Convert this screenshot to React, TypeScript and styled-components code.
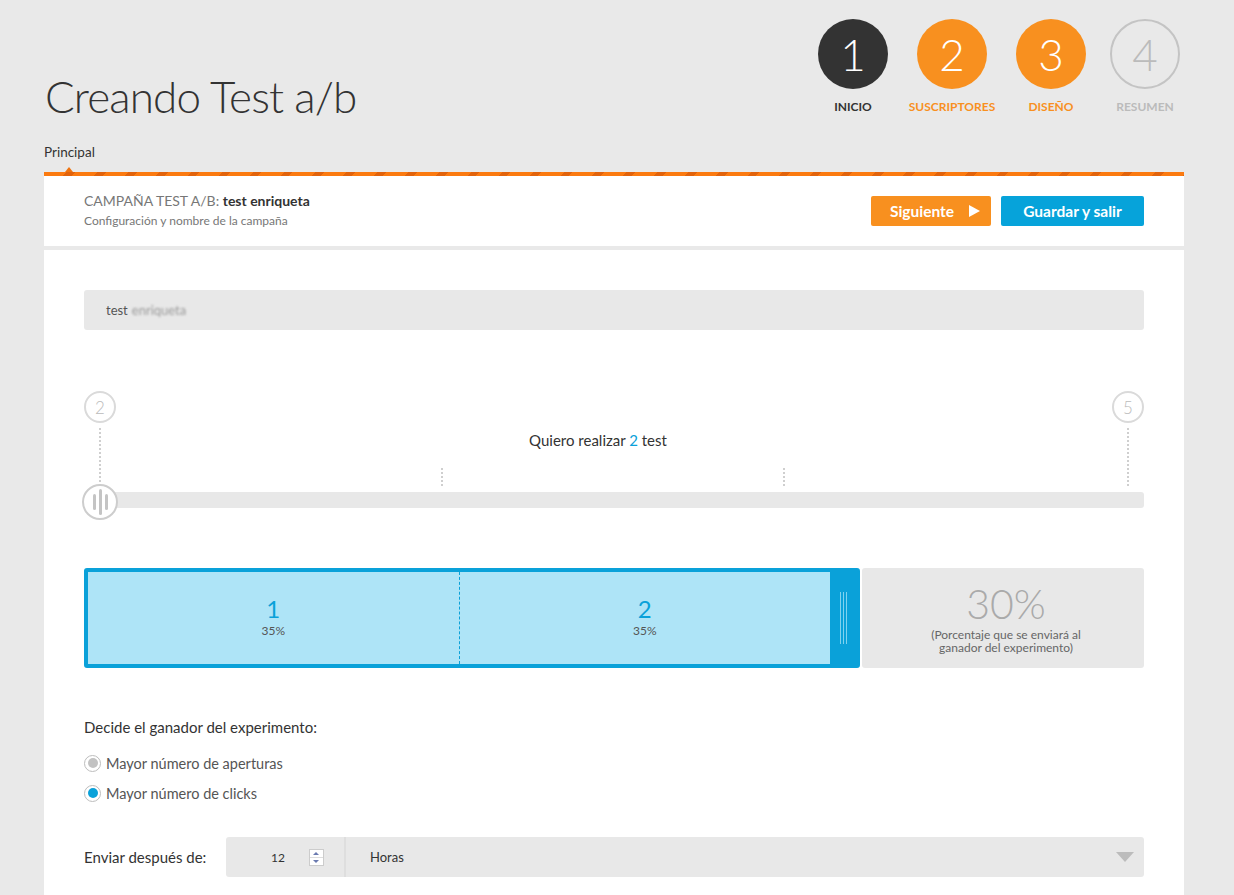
import React from 'react';
import styled, { createGlobalStyle } from 'styled-components';

const Global = createGlobalStyle`
  html, body { margin: 0; padding: 0; background: #e9e9e9; overflow: hidden; }
  body { font-family: Lato, "Open Sans", Arial, sans-serif; color: #333; }
  * { box-sizing: border-box; }
`;

const BLUE = '#0aa1d9';
const ORANGE = '#f8901f';

const Page = styled.div`
  height: 895px;
  padding: 0 50px 0 44px;
  display: flex;
  flex-direction: column;
`;

const Top = styled.div`
  display: flex;
  justify-content: space-between;
  align-items: flex-start;
  height: 136px;
`;

const Title = styled.h1`
  margin: 74px 0 0 1px;
  font-size: 44px;
  line-height: 44px;
  font-weight: 300;
  color: #333;
  letter-spacing: -0.85px;
`;

const Steps = styled.div`
  display: flex;
  margin: 19px 4px 0 0;
`;

const Step = styled.div<{ $gap: number }>`
  width: 70px;
  margin-left: ${(p) => p.$gap}px;
  display: flex;
  flex-direction: column;
  align-items: center;
`;

const StepCircle = styled.div<{ $bg: string; $border?: string; $color: string }>`
  width: 70px;
  height: 70px;
  border-radius: 50%;
  background: ${(p) => p.$bg};
  border: ${(p) => (p.$border ? `2px solid ${p.$border}` : 'none')};
  color: ${(p) => p.$color};
  display: flex;
  align-items: center;
  justify-content: center;
  font-size: 44px;
  font-weight: 300;
  line-height: 1;
`;

const StepLabel = styled.div<{ $color: string }>`
  margin-top: 11px;
  font-size: 12px;
  line-height: 14px;
  font-weight: 700;
  color: ${(p) => p.$color};
  white-space: nowrap;
  text-transform: uppercase;
`;

const Tabs = styled.div`
  height: 36px;
  display: flex;
`;

const Tab = styled.div`
  position: relative;
  height: 36px;
  padding-top: 8px;
  font-size: 13.5px;
  line-height: 16px;
  color: #333;
  &::after {
    content: '';
    position: absolute;
    bottom: 0;
    left: 50%;
    transform: translateX(-50%);
    border-left: 4px solid transparent;
    border-right: 4px solid transparent;
    border-bottom: 5px solid #ef7410;
  }
`;

const Panel = styled.div`
  flex: 1;
  background: #fff;
  display: flex;
  flex-direction: column;
`;

const OrangeBar = styled.div`
  height: 4px;
  background: repeating-linear-gradient(
    135deg,
    #fb7a10 0px,
    #fb7a10 16px,
    #e2630b 16px,
    #e2630b 22px
  );
`;

const Header = styled.div`
  height: 74px;
  padding: 0 40px;
  border-bottom: 4px solid #e9e9e9;
  display: flex;
  align-items: center;
  justify-content: space-between;
`;

const HeaderText = styled.div`
  display: flex;
  flex-direction: column;
  gap: 4px;
`;

const HeaderTitle = styled.div`
  font-size: 14px;
  line-height: 16px;
  color: #777;
  b { color: #333; font-weight: 700; }
`;

const HeaderSub = styled.div`
  font-size: 12px;
  line-height: 16px;
  color: #777;
`;

const Buttons = styled.div`
  display: flex;
  gap: 10px;
`;

const Button = styled.button<{ $bg: string; $w: number }>`
  width: ${(p) => p.$w}px;
  height: 30px;
  border: none;
  border-radius: 2px;
  background: ${(p) => p.$bg};
  color: #fff;
  font-family: Lato, sans-serif;
  font-size: 15.5px;
  font-weight: 700;
  display: flex;
  align-items: center;
  justify-content: center;
  gap: 15px;
  padding: 0;
`;

const PlayIcon = styled.span`
  display: inline-block;
  border-left: 11px solid #fff;
  border-top: 6.5px solid transparent;
  border-bottom: 6.5px solid transparent;
  margin-right: -8px;
`;

const Body = styled.div`
  padding: 40px 40px 0;
  display: flex;
  flex-direction: column;
`;

const NameInput = styled.div`
  height: 40px;
  background: #e8e8e8;
  border-radius: 3px;
  padding-left: 22px;
  display: flex;
  align-items: center;
  font-size: 13px;
  color: #555;
`;

const Blurred = styled.span`
  filter: blur(1.3px);
  color: #999;
  margin-left: 4px;
`;

const SliderWrap = styled.div`
  position: relative;
  margin-top: 61px;
`;

const EndLabels = styled.div`
  display: flex;
  justify-content: space-between;
`;

const NumCircle = styled.div`
  width: 32px;
  height: 32px;
  border-radius: 50%;
  border: 2px solid #dadada;
  color: #bbb;
  font-size: 17px;
  font-weight: 300;
  display: flex;
  align-items: center;
  justify-content: center;
  background: #fff;
`;

const Caption = styled.div`
  margin-top: 8px;
  padding-right: 32px;
  text-align: center;
  font-size: 15px;
  line-height: 18px;
  color: #333;
  span { color: ${BLUE}; }
`;

const Track = styled.div`
  margin-top: 43px;
  height: 16px;
  background: #e8e8e8;
  border-radius: 3px;
`;

const Tick = styled.div<{ $long?: boolean }>`
  position: absolute;
  width: 2px;
  top: ${(p) => (p.$long ? 37 : 77)}px;
  height: ${(p) => (p.$long ? 58 : 18)}px;
  background: repeating-linear-gradient(180deg, #cfcfcf 0 2px, transparent 2px 4px);
`;

const Handle = styled.div`
  position: absolute;
  left: -2px;
  top: 93px;
  width: 36px;
  height: 36px;
  border-radius: 50%;
  background: #fff;
  border: 2px solid #cdcdcd;
  display: flex;
  align-items: center;
  justify-content: center;
  gap: 3px;
`;

const GripBar = styled.i<{ $h: number }>`
  display: block;
  width: 3px;
  height: ${(p) => p.$h}px;
  border-radius: 2px;
  background: #c4c4c4;
`;

const SplitRow = styled.div`
  margin-top: 60px;
  height: 100px;
  display: flex;
  gap: 2px;
`;

const BlueBox = styled.div`
  width: 776px;
  border: 4px solid ${BLUE};
  border-radius: 3px;
  background: #aee4f7;
  display: flex;
`;

const Segment = styled.div<{ $dashed?: boolean }>`
  flex: 1;
  display: flex;
  flex-direction: column;
  align-items: center;
  justify-content: center;
  padding-bottom: 2px;
  border-left: ${(p) => (p.$dashed ? `1px dashed ${BLUE}` : 'none')};
`;

const SegNum = styled.div`
  font-size: 24px;
  line-height: 26px;
  color: ${BLUE};
`;

const SegPct = styled.div`
  margin-top: 2px;
  font-size: 12px;
  line-height: 14px;
  color: #555;
`;

const Grip = styled.div`
  width: 26px;
  background: ${BLUE};
  display: flex;
  align-items: center;
  justify-content: center;
  gap: 2px;
`;

const GripLine = styled.i`
  display: block;
  width: 1px;
  height: 52px;
  background: #7fd2ef;
`;

const GreyBox = styled.div`
  flex: 1;
  background: #e8e8e8;
  border-radius: 3px;
  display: flex;
  flex-direction: column;
  align-items: center;
  justify-content: center;
  text-align: center;
  padding: 0 0 0 6px;
`;

const BigPct = styled.div`
  font-size: 41px;
  line-height: 44px;
  font-weight: 300;
  color: #aaa;
`;

const PctNote = styled.div`
  margin-top: 2px;
  font-size: 12px;
  line-height: 13px;
  color: #666;
`;

const SectionLabel = styled.div`
  margin-top: 49px;
  font-size: 15px;
  line-height: 20px;
  color: #333;
`;

const Radios = styled.div`
  margin-top: 11px;
  display: flex;
  flex-direction: column;
`;

const RadioRow = styled.label`
  height: 30px;
  display: flex;
  align-items: center;
  gap: 5px;
  font-size: 14.5px;
  color: #555;
`;

const RadioDot = styled.span<{ $color: string }>`
  width: 17px;
  height: 17px;
  border-radius: 50%;
  border: 1px solid #bdbdbd;
  background: #fff;
  display: flex;
  align-items: center;
  justify-content: center;
  &::after {
    content: '';
    width: 10px;
    height: 10px;
    border-radius: 50%;
    background: ${(p) => p.$color};
  }
`;

const SendRow = styled.div`
  margin-top: 29px;
  display: flex;
  align-items: center;
`;

const SendLabel = styled.div`
  width: 142px;
  font-size: 15px;
  color: #333;
`;

const SendBox = styled.div`
  flex: 1;
  height: 40px;
  background: #e8e8e8;
  border-radius: 3px;
  display: flex;
  align-items: center;
`;

const NumPart = styled.div`
  width: 120px;
  height: 100%;
  border-right: 2px solid #dedede;
  display: flex;
  align-items: center;
  padding-left: 45px;
  gap: 24px;
  font-size: 12px;
  color: #333;
`;

const Spinner = styled.div`
  width: 15px;
  height: 17px;
  background: #fff;
  border: 1px solid #ccc;
  display: flex;
  flex-direction: column;
`;

const SpinHalf = styled.div<{ $down?: boolean }>`
  flex: 1;
  display: flex;
  align-items: center;
  justify-content: center;
  border-top: ${(p) => (p.$down ? '1px solid #ddd' : 'none')};
  &::after {
    content: '';
    border-left: 3px solid transparent;
    border-right: 3px solid transparent;
    ${(p) => (p.$down ? 'border-top: 3px solid #6a7ab0;' : 'border-bottom: 3px solid #6a7ab0;')}
  }
`;

const UnitText = styled.div`
  padding-left: 24px;
  font-size: 13px;
  color: #333;
  flex: 1;
`;

const Caret = styled.span`
  margin-right: 10px;
  border-left: 9px solid transparent;
  border-right: 9px solid transparent;
  border-top: 10px solid #bcbcbc;
`;

const steps = [
  { n: 1, label: 'Inicio', bg: '#333', color: '#fff', labelColor: '#333', gap: 0 },
  { n: 2, label: 'Suscriptores', bg: ORANGE, color: '#fff', labelColor: ORANGE, gap: 29 },
  { n: 3, label: 'Diseño', bg: ORANGE, color: '#fff', labelColor: ORANGE, gap: 29 },
  { n: 4, label: 'Resumen', bg: 'transparent', color: '#bbb', labelColor: '#bbb', border: '#c4c4c4', gap: 24 },
];

export default function App() {
  return (
    <>
      <Global />
      <Page>
        <Top>
          <Title>Creando Test a/b</Title>
          <Steps>
            {steps.map((s) => (
              <Step key={s.n} $gap={s.gap}>
                <StepCircle $bg={s.bg} $color={s.color} $border={s.border}>
                  {s.n}
                </StepCircle>
                <StepLabel $color={s.labelColor}>{s.label}</StepLabel>
              </Step>
            ))}
          </Steps>
        </Top>
        <Tabs>
          <Tab>Principal</Tab>
        </Tabs>
        <Panel>
          <OrangeBar />
          <Header>
            <HeaderText>
              <HeaderTitle>
                CAMPAÑA TEST A/B: <b>test enriqueta</b>
              </HeaderTitle>
              <HeaderSub>Configuración y nombre de la campaña</HeaderSub>
            </HeaderText>
            <Buttons>
              <Button $bg={ORANGE} $w={120}>
                Siguiente <PlayIcon />
              </Button>
              <Button $bg="#06a3da" $w={143}>
                Guardar y salir
              </Button>
            </Buttons>
          </Header>
          <Body>
            <NameInput>
              test<Blurred>enriqueta</Blurred>
            </NameInput>

            <SliderWrap>
              <EndLabels>
                <NumCircle>2</NumCircle>
                <NumCircle>5</NumCircle>
              </EndLabels>
              <Caption>
                Quiero realizar <span>2</span> test
              </Caption>
              <Track />
              <Tick $long style={{ left: 15 }} />
              <Tick style={{ left: 357 }} />
              <Tick style={{ left: 699 }} />
              <Tick $long style={{ left: 1043 }} />
              <Handle>
                <GripBar $h={16} />
                <GripBar $h={26} />
                <GripBar $h={16} />
              </Handle>
            </SliderWrap>

            <SplitRow>
              <BlueBox>
                <Segment>
                  <SegNum>1</SegNum>
                  <SegPct>35%</SegPct>
                </Segment>
                <Segment $dashed>
                  <SegNum>2</SegNum>
                  <SegPct>35%</SegPct>
                </Segment>
                <Grip>
                  <GripLine />
                  <GripLine />
                  <GripLine />
                </Grip>
              </BlueBox>
              <GreyBox>
                <BigPct>30%</BigPct>
                <PctNote>
                  (Porcentaje que se enviará al
                  <br />
                  ganador del experimento)
                </PctNote>
              </GreyBox>
            </SplitRow>

            <SectionLabel>Decide el ganador del experimento:</SectionLabel>
            <Radios>
              <RadioRow>
                <RadioDot $color="#c2c2c2" />
                Mayor número de aperturas
              </RadioRow>
              <RadioRow>
                <RadioDot $color={BLUE} />
                Mayor número de clicks
              </RadioRow>
            </Radios>

            <SendRow>
              <SendLabel>Enviar después de:</SendLabel>
              <SendBox>
                <NumPart>
                  12
                  <Spinner>
                    <SpinHalf />
                    <SpinHalf $down />
                  </Spinner>
                </NumPart>
                <UnitText>Horas</UnitText>
                <Caret />
              </SendBox>
            </SendRow>
          </Body>
        </Panel>
      </Page>
    </>
  );
}
